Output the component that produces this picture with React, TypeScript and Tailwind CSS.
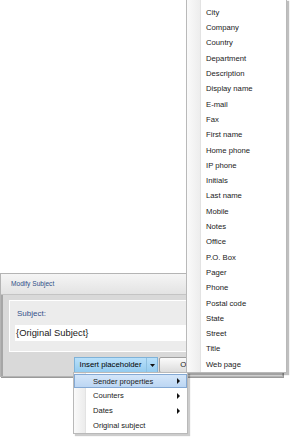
const fields = [
  "City",
  "Company",
  "Country",
  "Department",
  "Description",
  "Display name",
  "E-mail",
  "Fax",
  "First name",
  "Home phone",
  "IP phone",
  "Initials",
  "Last name",
  "Mobile",
  "Notes",
  "Office",
  "P.O. Box",
  "Pager",
  "Phone",
  "Postal code",
  "State",
  "Street",
  "Title",
  "Web page",
];

const placeholders = [
  { label: "Sender properties", sub: true, active: true },
  { label: "Counters", sub: true },
  { label: "Dates", sub: true },
  { label: "Original subject", sub: false },
];

const Arrow = () => (
  <svg width="3" height="6" viewBox="0 0 3 6" className="shrink-0">
    <path d="M0 0 L3 3 L0 6 Z" fill="#111" />
  </svg>
);

export default function App() {
  return (
    <div
      className="relative w-[295px] h-[438px] overflow-hidden bg-white text-[#1a1a1a]"
      style={{ fontFamily: "'Liberation Sans', Arial, sans-serif" }}
    >
      {/* dialog */}
      <div className="mt-[273px] w-[283px] h-[104px] flex flex-col border border-[#b4b4b4] bg-[#d9d9d9] shadow-[1px_1px_0_#9a9a9a]">
        <div className="h-[21px] shrink-0 flex items-center pl-[10px] bg-gradient-to-b from-[#f5f5f5] to-[#e3e3e3] border-b border-[#c4c4c4] text-[6.6px] text-[#2f4f86]">
          Modify Subject
        </div>
        <div className="flex-1 flex flex-col border-l-[2px] border-[#a6a6a6] pl-[6px] pt-[5px]">
          <div className="h-[52px] flex flex-col bg-[#ececec] border border-white pl-[5px] pt-[7px]">
            <div className="text-[8px] leading-[12px] text-[#34518a] pl-[2px]">Subject:</div>
            <div className="mt-[5px] h-[16px] bg-white flex items-center pl-[1px] text-[9.4px] text-[#1a1a1a]">
              {"{Original Subject}"}
            </div>
          </div>
          <div className="mt-[5px] flex pl-[65px]">
            <div className="h-[16px] flex border border-[#7fb2d8] bg-gradient-to-b from-[#b9e0fa] to-[#94cbef]">
              <div className="w-[71px] flex items-center justify-center text-[7.8px] text-black">
                Insert placeholder
              </div>
              <div className="w-[11px] flex items-center justify-center border-l border-[#8fc0e0]">
                <svg width="5" height="3" viewBox="0 0 5 3">
                  <path d="M0 0 H5 L2.5 3 Z" fill="#111" />
                </svg>
              </div>
            </div>
            <div className="ml-[1px] w-[54px] h-[16px] flex items-center justify-center border border-[#a0a0a0] rounded-[2px] bg-gradient-to-b from-[#fbfbfb] to-[#dcdcdc] text-[7.8px]">
              OK
            </div>
          </div>
        </div>
      </div>

      {/* field list menu */}
      <div className="absolute left-[186px] top-[-1px] w-[101px] h-[374px] flex bg-white border border-[#b9b9b9] shadow-[2px_2px_1px_rgba(0,0,0,0.25)]">
        <div className="w-[14px] shrink-0 bg-gradient-to-r from-[#fafafa] to-[#ededed] border-r border-[#e3e3e3]" />
        <div className="flex-1 flex flex-col pt-[5px] pl-[5px]">
          {fields.map((f) => (
            <div key={f} className="h-[15.3px] flex items-center text-[7.7px] whitespace-nowrap">
              {f}
            </div>
          ))}
        </div>
      </div>

      {/* placeholder submenu */}
      <div className="absolute left-[73px] top-[372px] w-[115px] h-[62px] flex bg-white border border-[#b9b9b9] shadow-[2px_2px_1px_rgba(0,0,0,0.2)]">
        <div className="absolute left-0 top-0 bottom-0 w-[12px] bg-gradient-to-r from-[#fafafa] to-[#ececec] border-r border-[#e3e3e3]" />
        <div className="relative flex-1 flex flex-col pt-[1px]">
          {placeholders.map((p) => (
            <div
              key={p.label}
              className={
                p.active
                  ? "h-[15px] flex items-center pl-[18px] pr-[6px] bg-gradient-to-b from-[#d4e6f9] to-[#bcd6f3] border border-[#84a9d4] text-[7.6px]"
                  : "h-[15.5px] flex items-center pl-[19px] pr-[7px] text-[7.6px]"
              }
            >
              <span className="flex-1 whitespace-nowrap">{p.label}</span>
              {p.sub && <Arrow />}
            </div>
          ))}
        </div>
      </div>
    </div>
  );
}
